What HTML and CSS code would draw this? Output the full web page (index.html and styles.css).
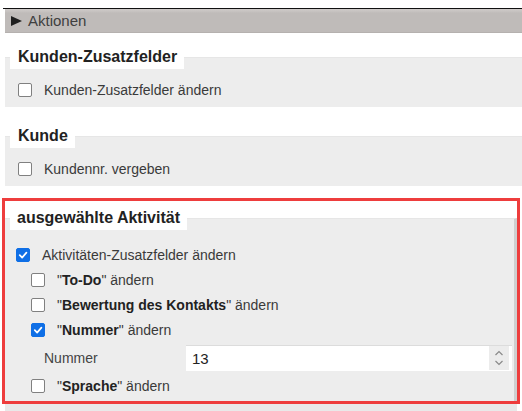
FILE: index.html
```html
<!DOCTYPE html>
<html lang="de">
<head>
<meta charset="utf-8">
<link rel="stylesheet" href="styles.css">
</head>
<body>
<div class="topline"></div>
<div class="actions"><span class="tri"></span><span class="actions-label">Aktionen</span></div>

<section class="group g1">
  <div class="legend">Kunden-Zusatzfelder</div>
  <div class="panel">
    <div class="row"><span class="cb"></span><span class="lbl">Kunden-Zusatzfelder ändern</span></div>
  </div>
</section>

<section class="group g2">
  <div class="legend">Kunde</div>
  <div class="panel">
    <div class="row"><span class="cb"></span><span class="lbl">Kundennr. vergeben</span></div>
  </div>
</section>

<div class="highlight">
  <section class="group g3">
    <div class="legend">ausgewählte Aktivität</div>
    <div class="panel panel3">
      <div class="row"><span class="cb checked"><svg viewBox="0 0 14 14" width="14" height="14"><path d="M3.2 7.2 L6 10 L11 4.2" fill="none" stroke="#fff" stroke-width="2" stroke-linecap="round" stroke-linejoin="round"/></svg></span><span class="lbl">Aktivitäten-Zusatzfelder ändern</span></div>
      <div class="row sub"><span class="cb"></span><span class="lbl">"<b>To-Do</b>" ändern</span></div>
      <div class="row sub"><span class="cb"></span><span class="lbl">"<b>Bewertung des Kontakts</b>" ändern</span></div>
      <div class="row sub"><span class="cb checked"><svg viewBox="0 0 14 14" width="14" height="14"><path d="M3.2 7.2 L6 10 L11 4.2" fill="none" stroke="#fff" stroke-width="2" stroke-linecap="round" stroke-linejoin="round"/></svg></span><span class="lbl">"<b>Nummer</b>" ändern</span></div>
      <div class="field-row">
        <span class="field-label">Nummer</span>
        <div class="input"><span class="input-val">13</span>
          <span class="spin"><svg viewBox="0 0 20 26" width="20" height="26"><path d="M6.5 10 L10 6.5 L13.5 10" fill="none" stroke="#8a8a8a" stroke-width="1.2"/><path d="M6.5 16 L10 19.5 L13.5 16" fill="none" stroke="#8a8a8a" stroke-width="1.2"/></svg></span>
        </div>
      </div>
      <div class="row sub"><span class="cb"></span><span class="lbl">"<b>Sprache</b>" ändern</span></div>
    </div>
  </section>
</div>
<div class="below"></div>
</body>
</html>
```

FILE: styles.css
```css
* { box-sizing: border-box; }
html, body {
  margin: 0;
  padding: 0;
  background: #ffffff;
  font-family: "Liberation Sans", Arial, sans-serif;
  color: #333;
  width: 522px;
  height: 411px;
  overflow: hidden;
}
.topline {
  margin-top: 8px;
  margin-left: 3px;
  height: 1px;
  background: #111;
}
.actions {
  margin-left: 5px;
  height: 24px;
  background: linear-gradient(#cfcbc9 0, #c4c0be 3px, #bfbbb9 4px, #bfbbb9 100%);
  border-bottom: 1px solid #b5b1af;
  display: flex;
  align-items: center;
  padding-left: 6px;
}
.tri {
  width: 0;
  height: 0;
  border-top: 5.5px solid transparent;
  border-bottom: 5.5px solid transparent;
  border-left: 11px solid #1f1f1f;
  margin-right: 6px;
}
.actions-label {
  font-size: 15px;
  color: #404040;
}
.group {
  margin-left: 5px;
}
.g1 { margin-top: 11px; }
.g2 { margin-top: 16px; }
.legend {
  display: block;
  width: fit-content;
  white-space: nowrap;
  height: 25px;
  line-height: 25px;
  padding: 0 7px 0 8px;
  margin-left: 5px;
  margin-bottom: -12px;
  background: #fff;
  font-weight: bold;
  font-size: 16px;
  color: #222;
  position: relative;
  z-index: 1;
}
.panel {
  background: #ededed;
  padding: 19px 0 5px 0;
  border-top: 1px solid #e6e6e6;
}
.row {
  height: 25px;
  display: flex;
  align-items: center;
  padding-left: 13px;
  font-size: 14px;
}
.row.sub { padding-left: 26px; }
.cb {
  width: 14px;
  height: 14px;
  border: 1.5px solid #808080;
  border-radius: 2px;
  background: #fff;
  flex: none;
  display: flex;
  align-items: center;
  justify-content: center;
}
.cb.checked {
  background: #0f6fe6;
  border-color: #0f6fe6;
}
.cb svg { display: block; }
.lbl {
  margin-left: 12px;
  color: #3a3a3a;
}
.lbl b { color: #222; }
.highlight {
  margin-top: 12px;
  margin-left: 2px;
  width: 518px;
  border: 3px solid #ee3d3d;
  padding-top: 4px;
}
.g3 {
  margin-left: 0;
}
.g3 .legend {
  margin-left: 5px;
  padding: 0 7px;
}
.panel3 {
  padding: 23px 0 3px 0;
  border-right: 3px solid #cfcfcf;
}
.panel3 .row { padding-left: 11px; }
.panel3 .row.sub { padding-left: 26px; }
.field-row {
  height: 31px;
  display: flex;
  align-items: center;
  padding-left: 39px;
  font-size: 14px;
}
.field-label {
  width: 142px;
  color: #444;
}
.input {
  width: 326px;
  height: 26px;
  background: #fff;
  border-top: 1px solid #dcdcdc;
  display: flex;
  align-items: center;
  justify-content: space-between;
  padding-left: 6px;
  padding-right: 3px;
}
.input-val {
  font-size: 15px;
  color: #222;
}
.spin {
  width: 20px;
  height: 24px;
  background: #ececec;
  display: flex;
  align-items: center;
  justify-content: center;
}
.spin svg { display: block; }
.below {
  margin-left: 5px;
  margin-right: 5px;
  height: 12px;
  background: #e9e9e9;
}
```
